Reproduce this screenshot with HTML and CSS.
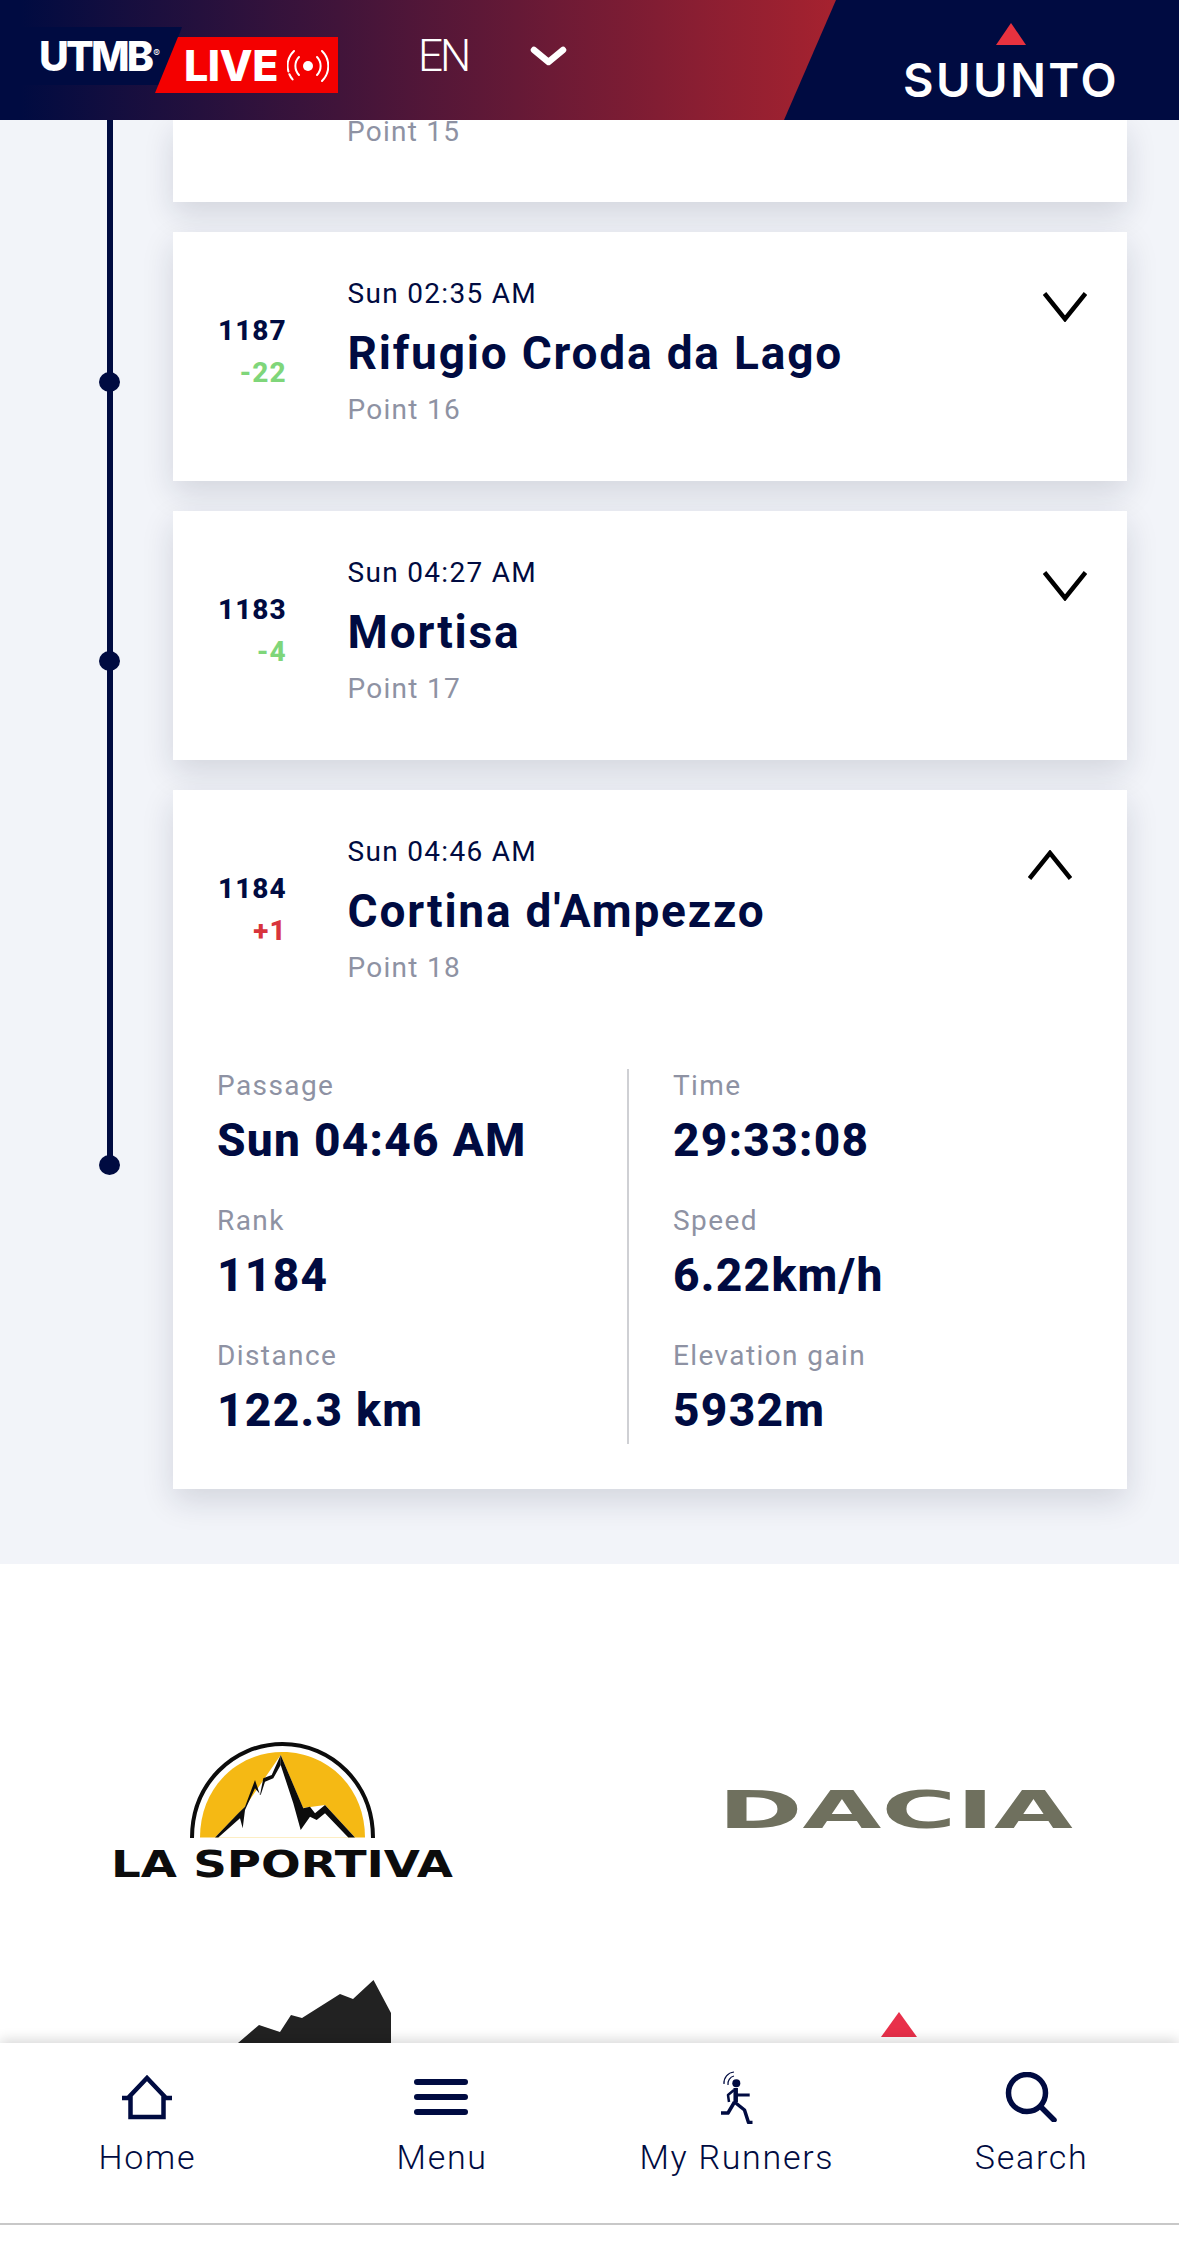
FILE: index.html
```html
<!DOCTYPE html>
<html lang="en">
<head>
<meta charset="utf-8">
<title>UTMB Live</title>
<link rel="stylesheet" href="styles.css">
</head>
<body>
<div class="screen">
  <header class="topbar">
    <div class="brand">
      <span class="brand-utmb">UTMB<sup class="brand-reg">®</sup></span>
      <span class="brand-live">
        <span class="brand-live-text">LIVE</span>
        <svg class="brand-signal" viewBox="0 0 42 34" fill="none" stroke="#fff" stroke-width="2" stroke-linecap="round">
          <circle cx="21" cy="17" r="5" fill="#fff" stroke="none"/>
          <path d="M12 8a13 13 0 0 0 0 18"/>
          <path d="M30 8a13 13 0 0 1 0 18"/>
          <path d="M7 2a21 21 0 0 0 0 30" stroke-dasharray="22 3 6"/>
          <path d="M35 2a21 21 0 0 1 0 30"/>
        </svg>
      </span>
    </div>
    <div class="lang">
      <span class="lang-code">EN</span>
      <svg class="lang-caret" viewBox="0 0 37 20" fill="none" stroke="#fff" stroke-width="6.5" stroke-linecap="round" stroke-linejoin="round"><path d="M4 4l14.500 12L33 4"/></svg>
    </div>
    <div class="sponsor">
      <svg class="sponsor-mark" viewBox="0 0 30 22"><path d="M15 0l15 22H0z" fill="#e8323f"/></svg>
      <span class="sponsor-name">SUUNTO</span>
    </div>
  </header>

  <main class="race">
    <div class="timeline">
      <section class="row">
        <div class="rail"></div>
        <article class="card card-cut"><div class="point">Point 15</div></article>
      </section>

      <section class="row">
        <div class="rail"><span class="dot"></span></div>
        <article class="card">
          <div class="card-head">
            <div class="rank"><div class="rank-num">1187</div><div class="rank-delta gain">-22</div></div>
            <div class="info">
              <div class="time">Sun 02:35 AM</div>
              <h2 class="name">Rifugio Croda da Lago</h2>
              <div class="point">Point 16</div>
            </div>
            <svg class="chev" viewBox="0 0 44 30" fill="none" stroke="#000" stroke-width="4.500"><path d="M1.500 1.500L22 27 42.500 1.500"/></svg>
          </div>
        </article>
      </section>

      <section class="row">
        <div class="rail"><span class="dot"></span></div>
        <article class="card">
          <div class="card-head">
            <div class="rank"><div class="rank-num">1183</div><div class="rank-delta gain">-4</div></div>
            <div class="info">
              <div class="time">Sun 04:27 AM</div>
              <h2 class="name">Mortisa</h2>
              <div class="point">Point 17</div>
            </div>
            <svg class="chev" viewBox="0 0 44 30" fill="none" stroke="#000" stroke-width="4.500"><path d="M1.500 1.500L22 27 42.500 1.500"/></svg>
          </div>
        </article>
      </section>

      <section class="row">
        <div class="rail"><span class="dot dot-end"></span></div>
        <article class="card">
          <div class="card-head">
            <div class="rank"><div class="rank-num">1184</div><div class="rank-delta loss">+1</div></div>
            <div class="info">
              <div class="time">Sun 04:46 AM</div>
              <h2 class="name">Cortina d'Ampezzo</h2>
              <div class="point">Point 18</div>
            </div>
            <svg class="chev chev-open" viewBox="0 0 44 30" fill="none" stroke="#000" stroke-width="4.500"><path d="M1.500 28.500L22 3 42.500 28.500"/></svg>
          </div>
          <div class="details">
            <div class="col">
              <div class="stat"><div class="stat-label">Passage</div><div class="stat-value">Sun 04:46 AM</div></div>
              <div class="stat"><div class="stat-label">Rank</div><div class="stat-value">1184</div></div>
              <div class="stat"><div class="stat-label">Distance</div><div class="stat-value">122.3 km</div></div>
            </div>
            <div class="col col-right">
              <div class="stat"><div class="stat-label">Time</div><div class="stat-value">29:33:08</div></div>
              <div class="stat"><div class="stat-label">Speed</div><div class="stat-value">6.22km/h</div></div>
              <div class="stat"><div class="stat-label">Elevation gain</div><div class="stat-value">5932m</div></div>
            </div>
          </div>
        </article>
      </section>
    </div>
  </main>

  <section class="partners">
    <svg class="logo-sportiva" viewBox="0 0 340 138">
      <path d="M87 95.500C87 45 125 10 169.500 10S252 45 252 95.500z" fill="#f5b914"/>
      <polygon points="167.700,13 132,64.700 102,95.500 242,95.500 212,63 190,66" fill="#fff"/>
      <polygon points="167.700,13 190.300,66.300 197,64.700 202,71.300 212,63 242,95.500 235.300,95.500 212,71.300 203.700,78 197,74.700 187.700,88 180.300,61.300 167.700,23" fill="#0c0c0c"/>
      <polygon points="167.700,13 158.700,33 150.300,36.300 147,53 142,38 132,64.700 125.300,71.300 102,95.500 105.300,95.500 127,76.300 129.700,86.300 132,68 142,46.300 147.700,53 152,39.700 160.300,36.300 167.700,23" fill="#0c0c0c"/>
      <path d="M79 96C79 42 120 2 169.500 2S260 42 260 96" fill="none" stroke="#0c0c0c" stroke-width="4"/>
      <text class="logo-sportiva-text" x="-2" y="135" textLength="342" lengthAdjust="spacingAndGlyphs">LA SPORTIVA</text>
    </svg>
    <svg class="logo-dacia" viewBox="0 0 347 40">
      <text class="logo-dacia-text" x="-7" y="39" textLength="355" lengthAdjust="spacingAndGlyphs">DACIA</text>
    </svg>
    <svg class="logo-peak" viewBox="0 0 340 63">
      <polygon points="125,63 146,45 167,52 178,35 189,38 227,14 240,19 260.500,0 278,33 278,63" fill="#222"/>
    </svg>
    <svg class="logo-arrow" viewBox="0 0 347 63">
      <polygon points="174,32 192,57 156,57" fill="#e8304a"/>
    </svg>
  </section>

  <nav class="tabbar">
    <div class="tabs">
      <a class="tab">
        <span class="tab-icon">
          <svg class="icon-home" viewBox="0 0 52 46" fill="none" stroke="#000b41" stroke-width="4.500"><path d="M1 24h6L26 4l19 20h6M9.500 22v21h33V22"/></svg>
        </span>
        <span class="tab-label">Home</span>
      </a>
      <a class="tab">
        <span class="tab-icon">
          <svg class="icon-menu" viewBox="0 0 54 36" fill="#000b41"><rect width="54" height="6" rx="3"/><rect y="15" width="54" height="6" rx="3"/><rect y="30" width="54" height="6" rx="3"/></svg>
        </span>
        <span class="tab-label">Menu</span>
      </a>
      <a class="tab">
        <span class="tab-icon">
          <svg class="icon-runner" viewBox="0 0 33 54" fill="none" stroke="#000b41" stroke-linejoin="round">
            <circle cx="16.300" cy="13.300" r="4" fill="#000b41" stroke="none"/>
            <path d="M15.700 18v14" stroke-width="4.500"/>
            <path d="M15.700 25h14" stroke-width="3"/>
            <path d="M14 20l-6 5 1 7" stroke-width="2.500"/>
            <path d="M14.500 32l-6.500 11H1" stroke-width="3.500"/>
            <path d="M14.500 32l10 8 4 12.500h4" stroke-width="3.500"/>
            <path d="M4 14A11 11 0 0 1 14 2" stroke-width="1.200"/>
            <path d="M8 15A8 8 0 0 1 14 6" stroke-width="1.200"/>
          </svg>
        </span>
        <span class="tab-label">My Runners</span>
      </a>
      <a class="tab">
        <span class="tab-icon">
          <svg class="icon-search" viewBox="0 0 54 50" fill="none" stroke="#000b41" stroke-width="5.500" stroke-linecap="round"><circle cx="22" cy="21" r="18.500"/><path d="M36 35l13 13"/></svg>
        </span>
        <span class="tab-label">Search</span>
      </a>
    </div>
  </nav>
</div>
</body>
</html>
```

FILE: styles.css
```css
* { box-sizing: border-box; }

html, body {
  margin: 0;
  padding: 0;
  background: #fff;
}

body {
  font-family: Roboto, "Liberation Sans", sans-serif;
  color: #000b41;
}

.screen {
  width: 1179px;
  height: 2259px;
  overflow: hidden;
  position: relative;
  display: flex;
  flex-direction: column;
}

/* top bar */
.topbar {
  flex: 0 0 120px;
  height: 120px;
  position: relative;
  z-index: 3;
  display: flex;
  align-items: flex-start;
  background: linear-gradient(90deg, #000b41 0, #000b41 20px, #a6222f 836px);
}

.brand {
  position: relative;
  display: flex;
  width: 338px;
  height: 93px;
  flex: none;
}

.brand-utmb {
  display: block;
  width: 182px;
  height: 58px;
  margin-top: 27px;
  padding-left: 39px;
  background: #000b41;
  clip-path: polygon(0 0, 100% 0, 88% 100%, 0 100%);
  color: #fff;
  font-family: Inter, sans-serif;
  font-weight: 800;
  font-size: 41px;
  line-height: 58px;
  letter-spacing: -2.800px;
  white-space: nowrap;
}

.brand-reg {
  font-size: 10px;
  font-weight: 400;
  letter-spacing: 0;
  vertical-align: 14px;
  line-height: 0;
  margin-left: 2px;
}

.brand-live {
  position: absolute;
  left: 155px;
  top: 37px;
  width: 183px;
  height: 56px;
  display: flex;
  align-items: center;
  padding-left: 29px;
  background: #f40000;
  clip-path: polygon(23px 0, 100% 0, 100% 100%, 0 100%);
}

.brand-live-text {
  color: #fff;
  font-family: Inter, sans-serif;
  font-weight: 800;
  font-size: 43px;
  line-height: 56px;
  letter-spacing: -0.5px;
}

.brand-signal {
  width: 42px;
  height: 34px;
  margin-left: 9px;
  margin-top: 2px;
}

.lang {
  display: flex;
  align-items: flex-start;
  margin-left: 80px;
  flex: none;
}

.lang-code {
  margin-top: 28px;
  color: #fff;
  font-weight: 300;
  font-size: 44px;
  line-height: 56px;
  letter-spacing: -3px;
}

.lang-caret {
  width: 37px;
  height: 20px;
  margin-left: 62px;
  margin-top: 46px;
}

.sponsor {
  position: absolute;
  top: 0;
  right: 0;
  bottom: 0;
  width: 395px;
  background: #000b41;
  clip-path: polygon(52px 0, 100% 0, 100% 100%, 0 100%);
  display: flex;
  flex-direction: column;
  align-items: center;
  padding: 23px 0 0 59px;
}

.sponsor-mark {
  width: 30px;
  height: 22px;
  display: block;
}

.sponsor-name {
  margin-top: 11px;
  color: #fff;
  font-family: Inter, sans-serif;
  font-weight: 600;
  font-size: 47px;
  line-height: 48px;
  letter-spacing: 2.500px;
}

/* timeline */
.race {
  flex: none;
  background: #f2f4f9;
  padding-bottom: 75px;
}

.timeline {
  position: relative;
  display: flex;
  flex-direction: column;
  gap: 30px;
}

.timeline::before {
  content: "";
  position: absolute;
  left: 107px;
  top: 0;
  width: 6px;
  height: 1045px;
  background: #000b41;
}

.row {
  display: flex;
  align-items: flex-start;
  padding-right: 52px;
}

.rail {
  flex: 0 0 173px;
  padding-left: 99px;
}

.dot {
  position: relative;
  display: block;
  width: 21px;
  height: 20px;
  margin-top: 140px;
  border-radius: 50%;
  background: #000b41;
}

.dot-end {
  margin-top: 365px;
}

.card {
  flex: 1;
  min-width: 0;
  background: #fff;
  box-shadow: 0 12px 30px rgba(20, 25, 60, 0.14);
}

.card-cut {
  height: 82px;
  padding: 0 0 0 174px;
}

.card-cut .point {
  margin-top: 0;
  line-height: 24px;
}

.card-head {
  display: flex;
  align-items: flex-start;
  height: 249px;
  padding-left: 45px;
}

.rank {
  flex: 0 0 68px;
  margin-top: 79px;
  text-align: right;
  font-weight: 800;
  font-size: 28px;
  line-height: 40px;
  letter-spacing: 1px;
}

.rank-delta {
  margin-top: 2px;
}

.gain { color: #7fd67a; }
.loss { color: #d8343c; }

.info {
  flex: 1;
  margin-left: 61px;
  padding-top: 43px;
}

.time {
  font-size: 28px;
  line-height: 38px;
  letter-spacing: 1.300px;
  color: #000b41;
}

.name {
  margin: 12px 0 0;
  font-size: 46px;
  line-height: 56px;
  font-weight: 700;
  color: #000b41;
  letter-spacing: 1.800px;
}

.point {
  margin-top: 10px;
  font-size: 28px;
  line-height: 38px;
  letter-spacing: 1.250px;
  color: #8e92a3;
}

.chev {
  flex: none;
  width: 44px;
  height: 30px;
  margin: 60px 40px 0 0;
}

.chev-open {
  margin-right: 55px;
}

/* details */
.details {
  display: flex;
  padding: 30px 0 45px 44px;
}

.col {
  flex: 0 0 410px;
  display: flex;
  flex-direction: column;
  gap: 37px;
  padding-top: 1px;
  padding-bottom: 6px;
}

.col-right {
  flex: 1;
  border-left: 2px solid #cfd0d4;
  padding-left: 44px;
}

.stat-label {
  font-size: 28px;
  line-height: 32px;
  letter-spacing: 1.400px;
  color: #8e92a3;
}

.stat-value {
  margin-top: 10px;
  font-size: 46px;
  line-height: 56px;
  font-weight: 800;
  letter-spacing: 1.300px;
  color: #000b41;
}

/* partner logos */
.partners {
  flex: 1;
  background: #fff;
  display: grid;
  grid-template-columns: 340px 347px;
  column-gap: 272px;
  align-content: start;
  align-items: center;
  padding: 178px 0 0 113px;
}

.logo-sportiva {
  display: block;
  width: 340px;
  height: 138px;
  overflow: visible;
}

.logo-sportiva-text {
  font-family: "DejaVu Sans", sans-serif;
  font-weight: 700;
  font-size: 37px;
  fill: #0c0c0c;
}

.logo-dacia {
  display: block;
  width: 347px;
  height: 40px;
  margin-top: -4px;
  overflow: visible;
}

.logo-dacia-text {
  font-family: "DejaVu Sans", sans-serif;
  font-weight: 700;
  font-size: 52px;
  fill: #6f705e;
}

.logo-peak, .logo-arrow {
  display: block;
  margin-top: 100px;
  width: 100%;
  height: 63px;
}

/* bottom nav */
.tabbar {
  position: absolute;
  left: 0;
  right: 0;
  bottom: 0;
  height: 216px;
  z-index: 3;
  background: #fff;
  box-shadow: 0 -3px 12px rgba(0, 0, 0, 0.16);
}

.tabs {
  display: grid;
  grid-template-columns: repeat(4, 1fr);
  height: 182px;
  border-bottom: 2px solid #c8c8c8;
}

.tab {
  display: flex;
  flex-direction: column;
  align-items: center;
  padding-top: 27px;
  color: #000b41;
}

.tab-icon {
  height: 54px;
  display: flex;
  align-items: center;
  justify-content: center;
}

.tab-icon svg { display: block; }

.icon-home { width: 52px; height: 46px; }
.icon-menu { width: 54px; height: 36px; margin-left: -2px; }
.icon-runner { width: 33px; height: 54px; }
.icon-search { width: 54px; height: 50px; }

.tab-label {
  margin-top: 13px;
  font-weight: 300;
  font-size: 34px;
  line-height: 40px;
  letter-spacing: 1.700px;
  white-space: nowrap;
}
```
